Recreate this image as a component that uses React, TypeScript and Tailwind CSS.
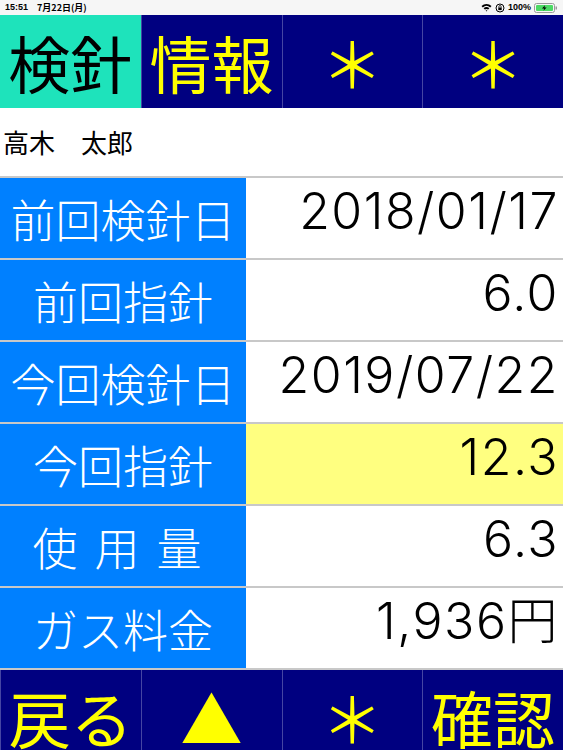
import React from "react";

const jp = { fontFamily: "'Noto Sans CJK JP', 'Noto Sans', sans-serif" } as const;
const num = { fontFamily: "Inter, 'Noto Sans CJK JP', sans-serif" } as const;

function StatusBar() {
  return (
    <div className="h-[15px] bg-[#f6f6f6] flex items-center justify-between px-[5px] text-[9px] font-semibold text-black leading-none" style={{ fontFamily: "'Liberation Sans', 'Noto Sans CJK JP', sans-serif" }}>
      <span className="flex gap-[9px]">
        <span>15:51</span>
        <span style={jp}>7月22日(月)</span>
      </span>
      <span className="flex items-center gap-[3px]">
        <svg width="11" height="9" viewBox="0 0 11 9">
          <path d="M0.5 3 A7.5 7.5 0 0 1 10.5 3 L9.2 4.4 A5.6 5.6 0 0 0 1.8 4.4 Z" fill="#000" />
          <path d="M2.6 5.3 A4.5 4.5 0 0 1 8.4 5.3 L7.1 6.6 A2.7 2.7 0 0 0 3.9 6.6 Z" fill="#000" />
          <path d="M4.6 7.5 A1.5 1.5 0 0 1 6.4 7.5 L5.5 8.5 Z" fill="#000" />
        </svg>
        <svg width="10" height="10" viewBox="0 0 10 10">
          <circle cx="5" cy="5" r="4" fill="none" stroke="#000" strokeWidth="1" />
          <rect x="3.3" y="4.5" width="3.4" height="2.6" fill="#000" />
          <path d="M3.9 4.6 V3.6 A1.1 1.1 0 0 1 6.1 3.6 V4.6" fill="none" stroke="#000" strokeWidth="0.8" />
        </svg>
        <span>100%</span>
        <svg width="24" height="10" viewBox="0 0 24 10">
          <rect x="0.5" y="0.5" width="20" height="9" rx="2" fill="none" stroke="#9a9a9a" strokeWidth="1" />
          <rect x="2" y="2" width="17" height="6" rx="1" fill="#4cd964" />
          <rect x="21.5" y="3.5" width="1.5" height="3" fill="#9a9a9a" />
          <path d="M11 2.3 L8 5.4 H10.2 L9.4 7.8 L12.6 4.6 H10.4 Z" fill="#000" />
        </svg>
      </span>
    </div>
  );
}

function NavCell({ children, teal }: { children: React.ReactNode; teal?: boolean }) {
  return (
    <div
      className={
        teal
          ? "bg-[#1ee3bb] text-black flex items-center justify-center overflow-hidden"
          : "bg-[#000080] text-[#ffff00] flex items-center justify-center overflow-hidden border-l border-[#4545a3]"
      }
    >
      {children}
    </div>
  );
}

function Row({ label, value, yellow }: { label: React.ReactNode; value: string; yellow?: boolean }) {
  return (
    <div className="border-t-2 border-[#c8c8c8] h-[82px] flex">
      <div className="w-[246px] shrink-0 bg-[#0080ff] text-white flex items-center justify-center text-[45px] font-light leading-none" style={jp}>
        {label}
      </div>
      <div
        className={
          yellow
            ? "flex-1 bg-[#ffff80] flex items-center justify-end pr-[4px] text-[50px] font-light tracking-[1.5px] text-black leading-none pb-[14px]"
            : "flex-1 bg-white flex items-center justify-end pr-[4px] text-[50px] font-light tracking-[1.5px] text-black leading-none pb-[14px]"
        }
        style={num}
      >
        {value}
      </div>
    </div>
  );
}

export default function App() {
  return (
    <div className="w-[563px] bg-white" style={jp}>
      <StatusBar />
      <div className="grid grid-cols-4 h-[93px] text-[62px] leading-none">
        <NavCell teal>検針</NavCell>
        <NavCell>情報</NavCell>
        <NavCell>＊</NavCell>
        <NavCell>＊</NavCell>
      </div>
      <div className="h-[68px] flex items-center pl-[3px] text-[26px] text-black leading-none">高木　太郎</div>
      <Row label="前回検針日" value="2018/01/17" />
      <Row label="前回指針" value="6.0" />
      <Row label="今回検針日" value="2019/07/22" />
      <Row label="今回指針" value="12.3" yellow />
      <Row
        label={
          <span className="flex gap-[17px] pr-[12px]">
            <span>使</span>
            <span>用</span>
            <span>量</span>
          </span>
        }
        value="6.3"
      />
      <Row label="ガス料金" value="1,936円" />
      <div className="border-t-2 border-[#c8c8c8] grid grid-cols-4 h-[95px] text-[62px] leading-none">
        <NavCell>戻る</NavCell>
        <NavCell>▲</NavCell>
        <NavCell>＊</NavCell>
        <NavCell>確認</NavCell>
      </div>
    </div>
  );
}
